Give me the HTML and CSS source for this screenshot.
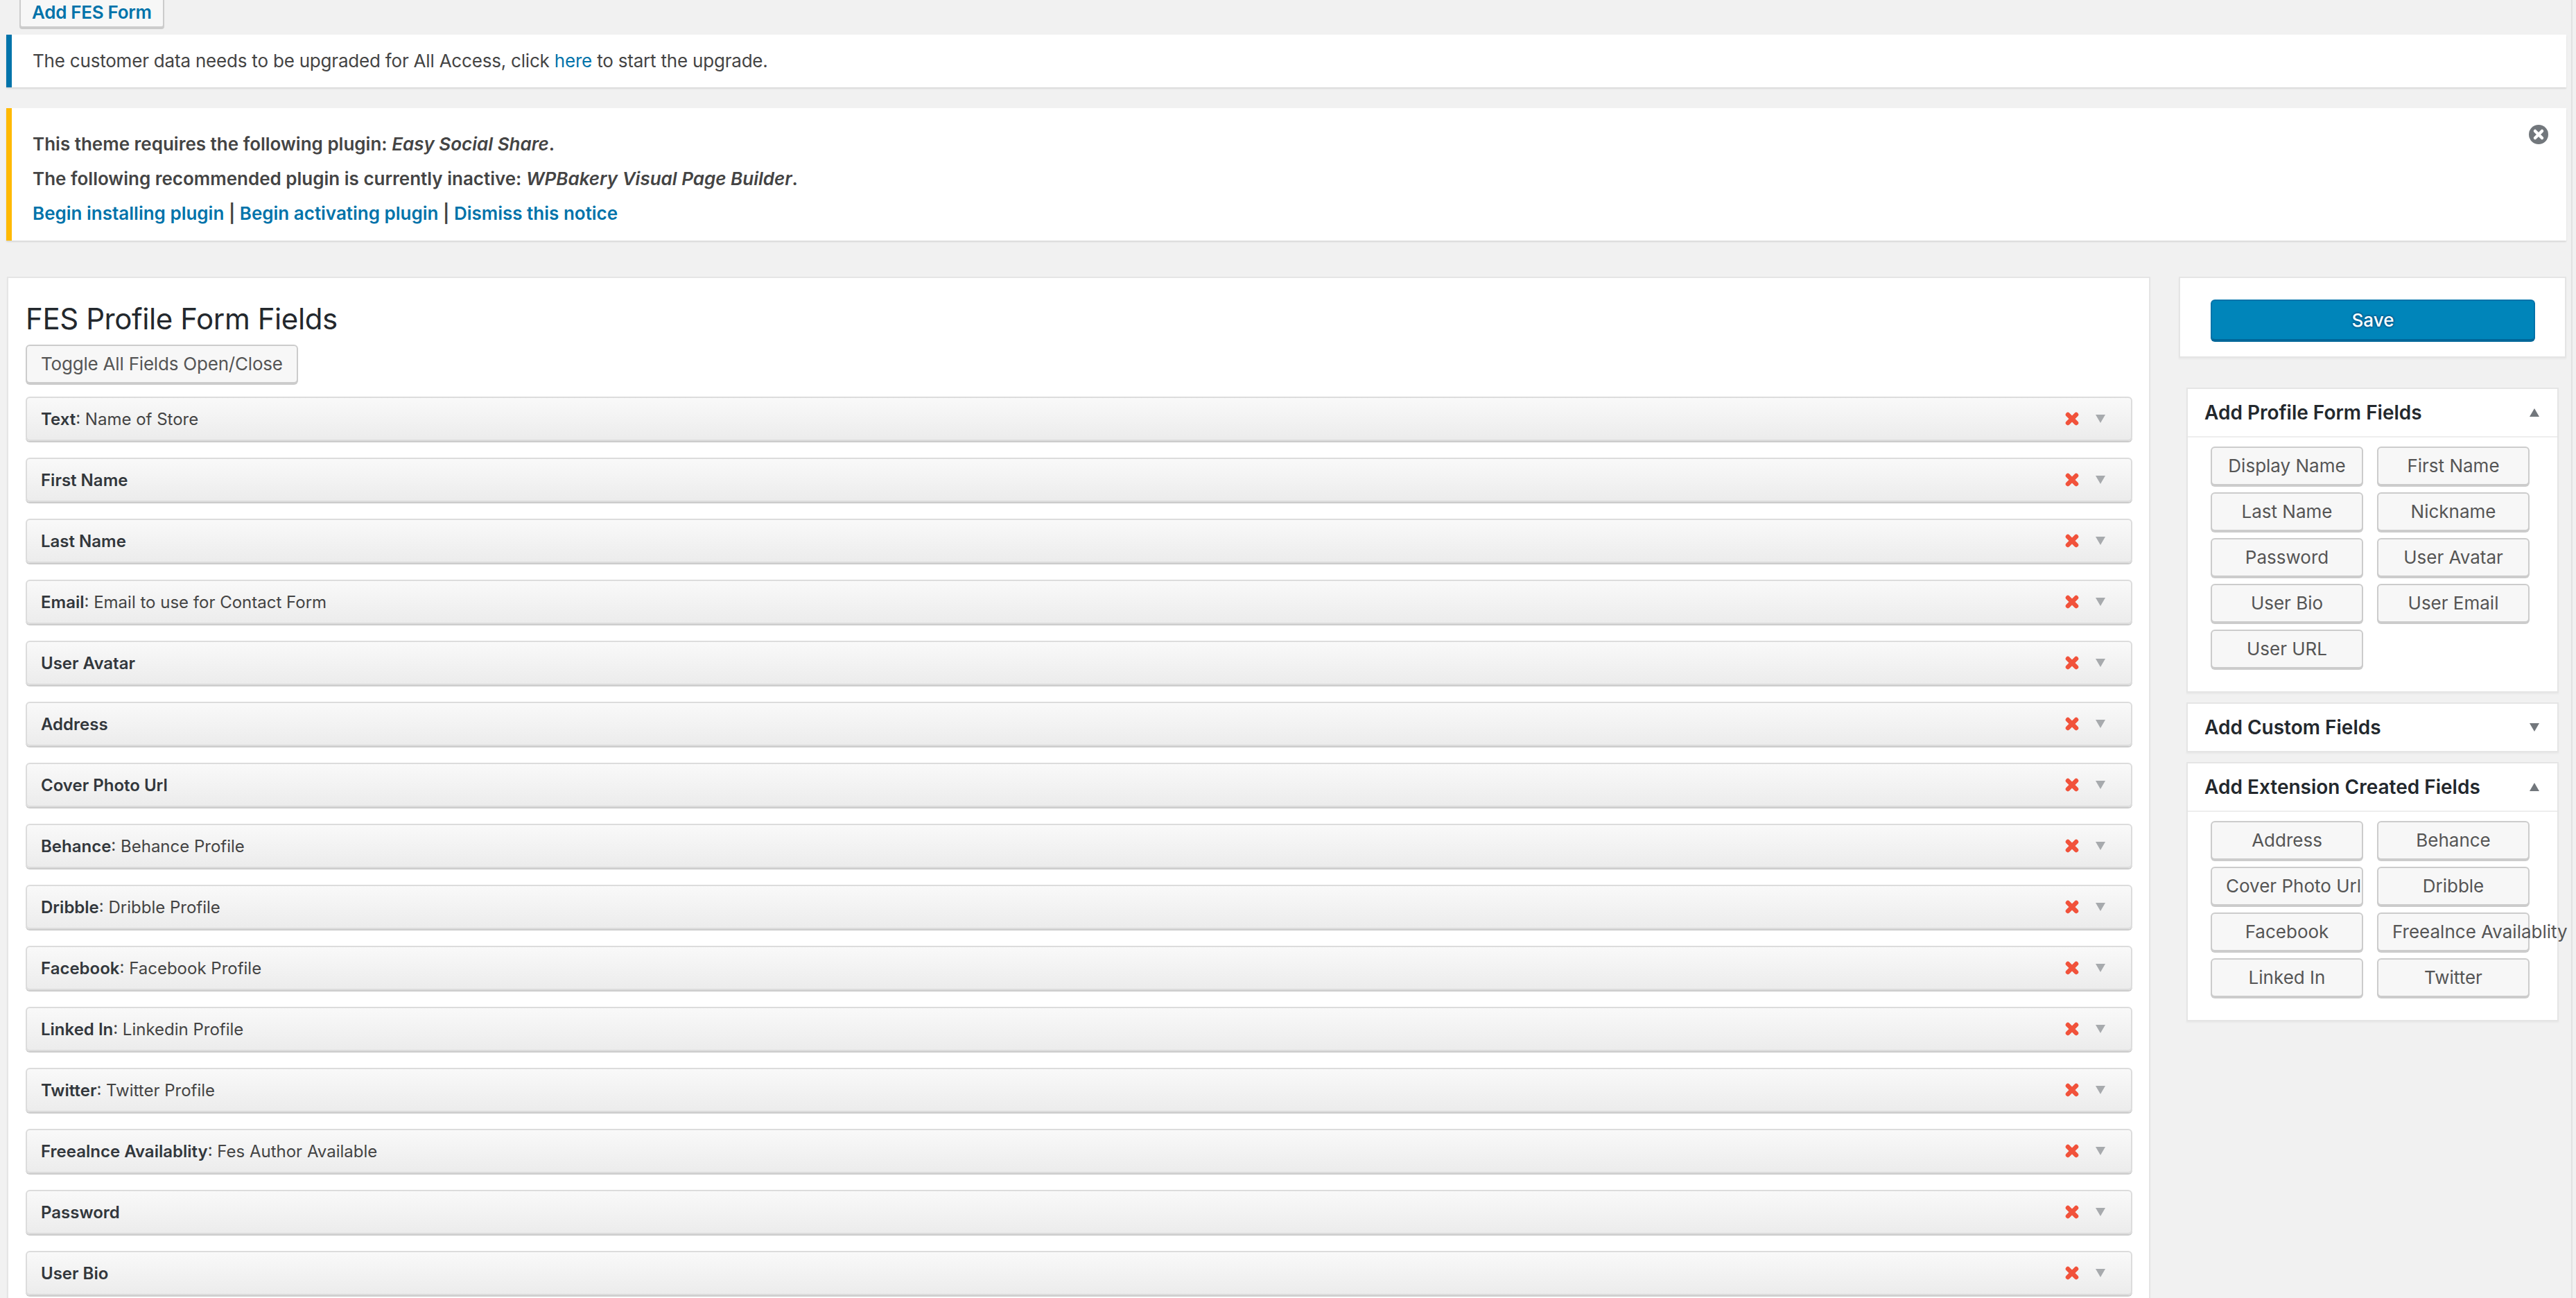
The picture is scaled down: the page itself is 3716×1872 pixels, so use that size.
FILE: index.html
```html
<!DOCTYPE html>
<html lang="en">
<head>
<meta charset="utf-8">
<title>FES Profile Form Fields</title>
<link rel="stylesheet" href="styles.css">
</head>
<body>
<div class="screen">
  <div class="wrap">
    <div class="title-row"><a class="page-title-action">Add FES Form</a></div>

    <div class="notice notice-info">
      <p>The customer data needs to be upgraded for All Access, click <a class="link">here</a> to start the upgrade.</p>
    </div>

    <div class="notice notice-warning">
      <p><strong>This theme requires the following plugin: <em>Easy Social Share</em>.</strong></p>
      <p><strong>The following recommended plugin is currently inactive: <em>WPBakery Visual Page Builder</em>.</strong></p>
      <p><strong><a class="link">Begin installing plugin</a> | <a class="link">Begin activating plugin</a> | <a class="link">Dismiss this notice</a></strong></p>
      <span class="notice-dismiss">
        <svg width="28" height="28" viewBox="0 0 28 28"><circle cx="14" cy="14" r="14" fill="#72777c"/><path d="M9 9 L19 19 M19 9 L9 19" stroke="#fff" stroke-width="4.5" stroke-linecap="round"/></svg>
      </span>
    </div>

    <div class="columns">
      <div class="main-box">
        <h1 class="box-title">FES Profile Form Fields</h1>
        <button class="btn toggle-all">Toggle All Fields Open/Close</button>
        <ul class="fields">
          <li class="field"><span class="field-label"><strong>Text</strong>: Name of Store</span><span class="field-actions"><svg class="ico-remove" width="20" height="20" viewBox="0 0 20 20"><path d="M4 4 L16 16 M16 4 L4 16" stroke="#f1523b" stroke-width="6.5" stroke-linecap="round"/></svg><svg class="ico-arrow" width="14" height="12" viewBox="0 0 14 12"><path d="M0 0 H14 L7 12 Z" fill="#a7aaad"/></svg></span></li>
          <li class="field"><span class="field-label"><strong>First Name</strong></span><span class="field-actions"><svg class="ico-remove" width="20" height="20" viewBox="0 0 20 20"><path d="M4 4 L16 16 M16 4 L4 16" stroke="#f1523b" stroke-width="6.5" stroke-linecap="round"/></svg><svg class="ico-arrow" width="14" height="12" viewBox="0 0 14 12"><path d="M0 0 H14 L7 12 Z" fill="#a7aaad"/></svg></span></li>
          <li class="field"><span class="field-label"><strong>Last Name</strong></span><span class="field-actions"><svg class="ico-remove" width="20" height="20" viewBox="0 0 20 20"><path d="M4 4 L16 16 M16 4 L4 16" stroke="#f1523b" stroke-width="6.5" stroke-linecap="round"/></svg><svg class="ico-arrow" width="14" height="12" viewBox="0 0 14 12"><path d="M0 0 H14 L7 12 Z" fill="#a7aaad"/></svg></span></li>
          <li class="field"><span class="field-label"><strong>Email</strong>: Email to use for Contact Form</span><span class="field-actions"><svg class="ico-remove" width="20" height="20" viewBox="0 0 20 20"><path d="M4 4 L16 16 M16 4 L4 16" stroke="#f1523b" stroke-width="6.5" stroke-linecap="round"/></svg><svg class="ico-arrow" width="14" height="12" viewBox="0 0 14 12"><path d="M0 0 H14 L7 12 Z" fill="#a7aaad"/></svg></span></li>
          <li class="field"><span class="field-label"><strong>User Avatar</strong></span><span class="field-actions"><svg class="ico-remove" width="20" height="20" viewBox="0 0 20 20"><path d="M4 4 L16 16 M16 4 L4 16" stroke="#f1523b" stroke-width="6.5" stroke-linecap="round"/></svg><svg class="ico-arrow" width="14" height="12" viewBox="0 0 14 12"><path d="M0 0 H14 L7 12 Z" fill="#a7aaad"/></svg></span></li>
          <li class="field"><span class="field-label"><strong>Address</strong></span><span class="field-actions"><svg class="ico-remove" width="20" height="20" viewBox="0 0 20 20"><path d="M4 4 L16 16 M16 4 L4 16" stroke="#f1523b" stroke-width="6.5" stroke-linecap="round"/></svg><svg class="ico-arrow" width="14" height="12" viewBox="0 0 14 12"><path d="M0 0 H14 L7 12 Z" fill="#a7aaad"/></svg></span></li>
          <li class="field"><span class="field-label"><strong>Cover Photo Url</strong></span><span class="field-actions"><svg class="ico-remove" width="20" height="20" viewBox="0 0 20 20"><path d="M4 4 L16 16 M16 4 L4 16" stroke="#f1523b" stroke-width="6.5" stroke-linecap="round"/></svg><svg class="ico-arrow" width="14" height="12" viewBox="0 0 14 12"><path d="M0 0 H14 L7 12 Z" fill="#a7aaad"/></svg></span></li>
          <li class="field"><span class="field-label"><strong>Behance</strong>: Behance Profile</span><span class="field-actions"><svg class="ico-remove" width="20" height="20" viewBox="0 0 20 20"><path d="M4 4 L16 16 M16 4 L4 16" stroke="#f1523b" stroke-width="6.5" stroke-linecap="round"/></svg><svg class="ico-arrow" width="14" height="12" viewBox="0 0 14 12"><path d="M0 0 H14 L7 12 Z" fill="#a7aaad"/></svg></span></li>
          <li class="field"><span class="field-label"><strong>Dribble</strong>: Dribble Profile</span><span class="field-actions"><svg class="ico-remove" width="20" height="20" viewBox="0 0 20 20"><path d="M4 4 L16 16 M16 4 L4 16" stroke="#f1523b" stroke-width="6.5" stroke-linecap="round"/></svg><svg class="ico-arrow" width="14" height="12" viewBox="0 0 14 12"><path d="M0 0 H14 L7 12 Z" fill="#a7aaad"/></svg></span></li>
          <li class="field"><span class="field-label"><strong>Facebook</strong>: Facebook Profile</span><span class="field-actions"><svg class="ico-remove" width="20" height="20" viewBox="0 0 20 20"><path d="M4 4 L16 16 M16 4 L4 16" stroke="#f1523b" stroke-width="6.5" stroke-linecap="round"/></svg><svg class="ico-arrow" width="14" height="12" viewBox="0 0 14 12"><path d="M0 0 H14 L7 12 Z" fill="#a7aaad"/></svg></span></li>
          <li class="field"><span class="field-label"><strong>Linked In</strong>: Linkedin Profile</span><span class="field-actions"><svg class="ico-remove" width="20" height="20" viewBox="0 0 20 20"><path d="M4 4 L16 16 M16 4 L4 16" stroke="#f1523b" stroke-width="6.5" stroke-linecap="round"/></svg><svg class="ico-arrow" width="14" height="12" viewBox="0 0 14 12"><path d="M0 0 H14 L7 12 Z" fill="#a7aaad"/></svg></span></li>
          <li class="field"><span class="field-label"><strong>Twitter</strong>: Twitter Profile</span><span class="field-actions"><svg class="ico-remove" width="20" height="20" viewBox="0 0 20 20"><path d="M4 4 L16 16 M16 4 L4 16" stroke="#f1523b" stroke-width="6.5" stroke-linecap="round"/></svg><svg class="ico-arrow" width="14" height="12" viewBox="0 0 14 12"><path d="M0 0 H14 L7 12 Z" fill="#a7aaad"/></svg></span></li>
          <li class="field"><span class="field-label"><strong>Freealnce Availablity</strong>: Fes Author Available</span><span class="field-actions"><svg class="ico-remove" width="20" height="20" viewBox="0 0 20 20"><path d="M4 4 L16 16 M16 4 L4 16" stroke="#f1523b" stroke-width="6.5" stroke-linecap="round"/></svg><svg class="ico-arrow" width="14" height="12" viewBox="0 0 14 12"><path d="M0 0 H14 L7 12 Z" fill="#a7aaad"/></svg></span></li>
          <li class="field"><span class="field-label"><strong>Password</strong></span><span class="field-actions"><svg class="ico-remove" width="20" height="20" viewBox="0 0 20 20"><path d="M4 4 L16 16 M16 4 L4 16" stroke="#f1523b" stroke-width="6.5" stroke-linecap="round"/></svg><svg class="ico-arrow" width="14" height="12" viewBox="0 0 14 12"><path d="M0 0 H14 L7 12 Z" fill="#a7aaad"/></svg></span></li>
          <li class="field"><span class="field-label"><strong>User Bio</strong></span><span class="field-actions"><svg class="ico-remove" width="20" height="20" viewBox="0 0 20 20"><path d="M4 4 L16 16 M16 4 L4 16" stroke="#f1523b" stroke-width="6.5" stroke-linecap="round"/></svg><svg class="ico-arrow" width="14" height="12" viewBox="0 0 14 12"><path d="M0 0 H14 L7 12 Z" fill="#a7aaad"/></svg></span></li>
        </ul>
      </div>

      <div class="sidebar">
        <div class="save-box"><button class="btn-primary">Save</button></div>

        <div class="postbox">
          <div class="hndle open"><h2>Add Profile Form Fields</h2><svg width="14" height="12" viewBox="0 0 14 12"><path d="M0 12 H14 L7 0 Z" fill="#72777c"/></svg></div>
          <div class="inside">
            <span class="fbtn">Display Name</span>
            <span class="fbtn">First Name</span>
            <span class="fbtn">Last Name</span>
            <span class="fbtn">Nickname</span>
            <span class="fbtn">Password</span>
            <span class="fbtn">User Avatar</span>
            <span class="fbtn">User Bio</span>
            <span class="fbtn">User Email</span>
            <span class="fbtn">User URL</span>
          </div>
        </div>

        <div class="postbox">
          <div class="hndle"><h2>Add Custom Fields</h2><svg width="14" height="12" viewBox="0 0 14 12"><path d="M0 0 H14 L7 12 Z" fill="#72777c"/></svg></div>
        </div>

        <div class="postbox">
          <div class="hndle open"><h2>Add Extension Created Fields</h2><svg width="14" height="12" viewBox="0 0 14 12"><path d="M0 12 H14 L7 0 Z" fill="#72777c"/></svg></div>
          <div class="inside">
            <span class="fbtn">Address</span>
            <span class="fbtn">Behance</span>
            <span class="fbtn">Cover Photo Url</span>
            <span class="fbtn">Dribble</span>
            <span class="fbtn">Facebook</span>
            <span class="fbtn">Freealnce Availablity</span>
            <span class="fbtn">Linked In</span>
            <span class="fbtn">Twitter</span>
          </div>
        </div>
      </div>
    </div>
  </div>
  <div class="scroll-edge"></div>
</div>
</body>
</html>
```

FILE: styles.css
```css
html {
  overflow: hidden;
}

body {
  margin: 0;
  background: #f1f1f1;
  font-family: Inter, "Noto Sans", sans-serif;
  font-size: 26px;
  color: #444;
}

.screen {
  display: flex;
  min-height: 1872px;
}

.wrap {
  flex: 1;
  min-width: 0;
  padding: 0 7px 0 9px;
}

.scroll-edge {
  width: 2px;
  background: #e2e2e2;
  margin-right: 5px;
}

/* title action */
.title-row {
  margin-top: -4px;
  padding-left: 19px;
  height: 44px;
}

.page-title-action {
  display: inline-block;
  box-sizing: border-box;
  height: 44px;
  padding: 6px 16px;
  line-height: 28px;
  font-size: 26px;
  font-weight: 600;
  letter-spacing: -0.3px;
  color: #0073aa;
  background: #f7f7f7;
  border: 2px solid #ccc;
  border-radius: 4px;
  box-shadow: 0 2px 0 #ccc;
}

/* notices */
.notice {
  background: #fff;
  border-left: 8px solid #0073aa;
  box-shadow: 0 2px 2px rgba(0, 0, 0, 0.1);
}

.notice p {
  margin: 0;
}

.link {
  color: #0073aa;
}

.notice-info {
  margin-top: 10px;
  padding: 18px 30px;
  line-height: 40px;
  letter-spacing: -0.2px;
}

.notice-warning {
  position: relative;
  margin-top: 30px;
  padding: 34px 80px 21px 30px;
  border-left-color: #ffb900;
  line-height: 36px;
}

.notice-warning p + p {
  margin-top: 14px;
}

.notice strong {
  font-weight: 600;
}

.notice-dismiss {
  position: absolute;
  top: 24px;
  right: 26px;
  width: 28px;
  height: 28px;
  display: flex;
}

/* columns */
.columns {
  display: flex;
  align-items: flex-start;
  margin-top: 52px;
}

.main-box {
  flex: 1;
  min-width: 0;
  margin: 0 41px 0 1px;
  background: #fff;
  border: 2px solid #e5e5e5;
  box-shadow: 0 2px 2px rgba(0, 0, 0, 0.04);
  padding: 33px 24px 40px 25px;
}

.box-title {
  margin: 0;
  font-size: 42px;
  line-height: 52px;
  font-weight: 400;
  letter-spacing: -0.4px;
  color: #23282d;
}

.btn {
  font-family: inherit;
  font-size: 26px;
  color: #555;
  background: #f7f7f7;
  border: 2px solid #ccc;
  border-radius: 6px;
  box-shadow: 0 2px 0 #ccc;
}

.toggle-all {
  display: block;
  box-sizing: border-box;
  height: 56px;
  margin-top: 11px;
  padding: 0 20px;
  line-height: 52px;
  letter-spacing: -0.2px;
}

.fields {
  list-style: none;
  margin: 19px 0 0;
  padding: 0;
}

.field {
  box-sizing: border-box;
  height: 64px;
  margin-bottom: 24px;
  padding: 0 37px 0 20px;
  display: flex;
  align-items: center;
  justify-content: space-between;
  border: 2px solid #dcdcdc;
  border-radius: 6px;
  background: linear-gradient(#f9f9f9, #ececec);
  box-shadow: 0 2px 0 #cccccc;
  font-size: 24px;
  color: #444;
}

.field-label strong {
  font-weight: 600;
  color: #32373c;
}

.field-actions {
  display: flex;
  align-items: center;
  gap: 24px;
}

/* sidebar */
.sidebar {
  width: 559px;
  flex: none;
}

.save-box {
  background: #fff;
  border: 2px solid #e5e5e5;
  box-shadow: 0 2px 2px rgba(0, 0, 0, 0.04);
  padding: 31px 43px 23px 44px;
}

.btn-primary {
  display: block;
  box-sizing: border-box;
  width: 100%;
  height: 59px;
  font-family: inherit;
  font-size: 26px;
  font-weight: 500;
  color: #fff;
  background: #0085ba;
  border: 2px solid #0073aa;
  border-bottom-color: #006799;
  border-radius: 6px;
  box-shadow: 0 2px 0 #006799;
  text-shadow: 0 -2px 2px #006799, 2px 0 2px #006799, 0 2px 2px #006799, -2px 0 2px #006799;
}

.postbox {
  margin: 14px 11px 0;
  background: #fff;
  border: 2px solid #e5e5e5;
  box-shadow: 0 2px 2px rgba(0, 0, 0, 0.04);
}

.save-box + .postbox {
  margin-top: 43px;
}

.hndle {
  height: 68px;
  padding: 0 26px 0 24px;
  display: flex;
  align-items: center;
  justify-content: space-between;
}

.hndle.open {
  border-bottom: 2px solid #eee;
}

.hndle h2 {
  margin: 0;
  font-size: 28px;
  font-weight: 600;
  color: #23282d;
}

.inside {
  display: grid;
  grid-template-columns: 220px 220px;
  column-gap: 20px;
  row-gap: 10px;
  padding: 13px 0 33px 33px;
}

.fbtn {
  box-sizing: border-box;
  height: 56px;
  padding: 0 20px;
  line-height: 52px;
  text-align: center;
  white-space: nowrap;
  font-size: 26px;
  color: #555;
  background: #f7f7f7;
  border: 2px solid #ccc;
  border-radius: 6px;
  box-shadow: 0 2px 0 #ccc;
}
```
